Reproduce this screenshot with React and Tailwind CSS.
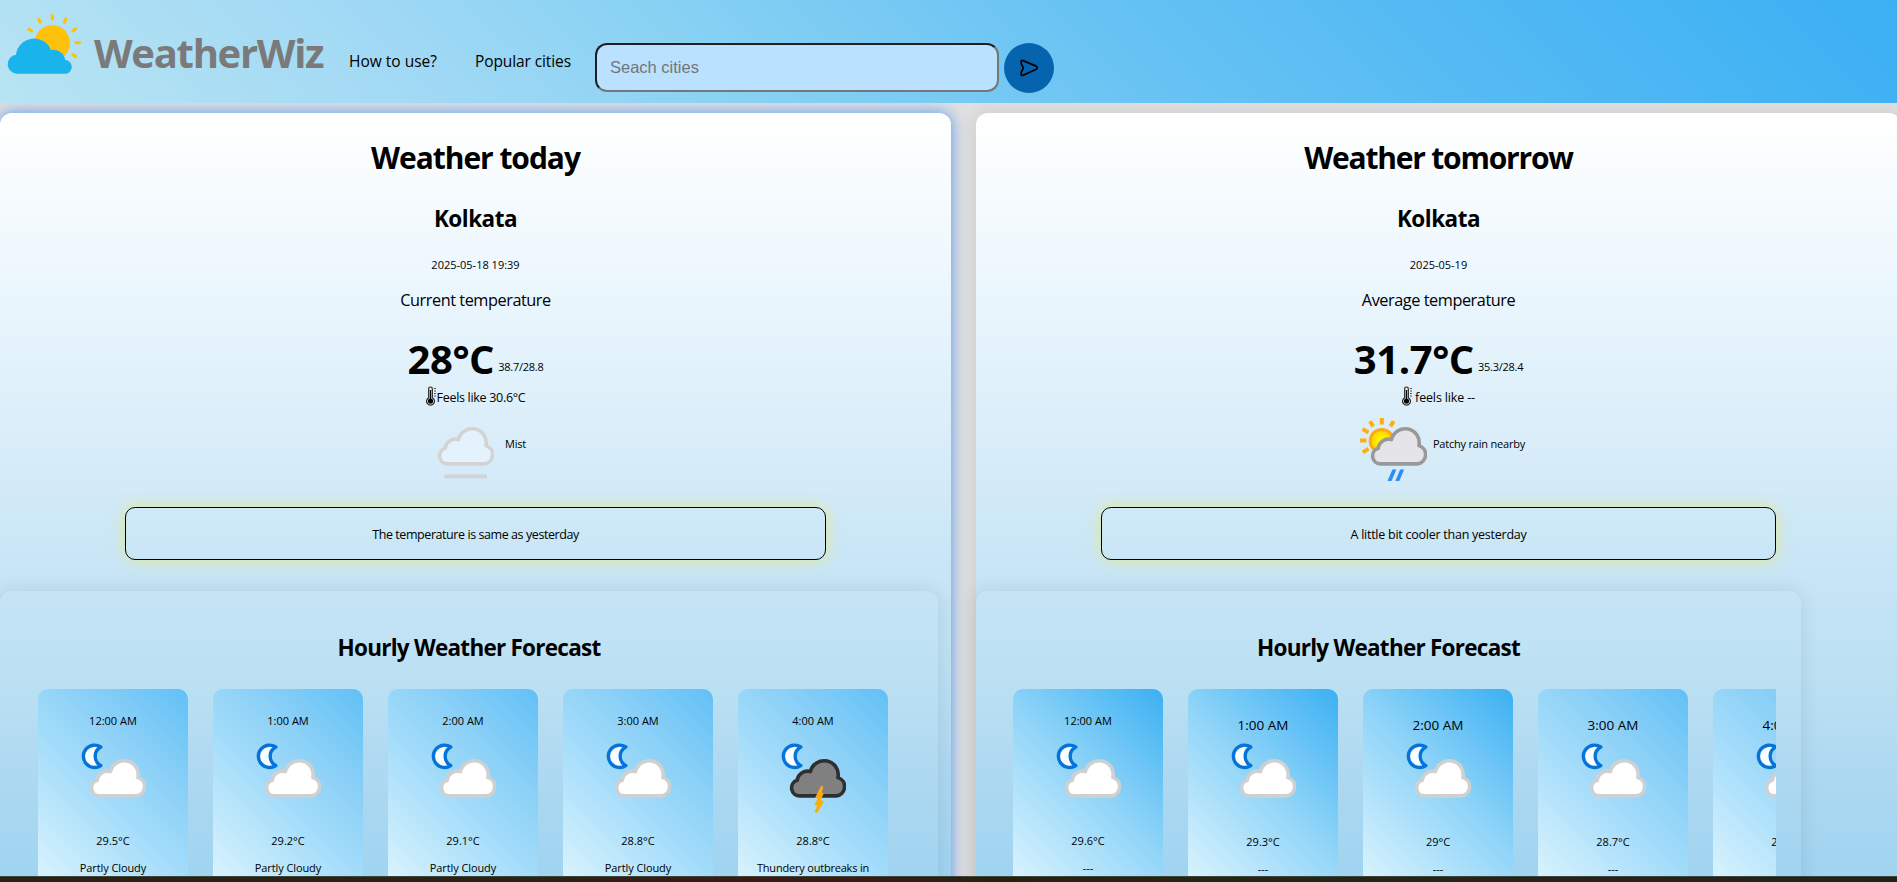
const CLOUD_PATH =
  "M10 35.9A8 8 0 0 1 7.4 20.3A10.2 10.2 0 0 1 20.4 11.6A13.85 13.85 0 0 1 47.5 17.6A9.4 9.4 0 0 1 45.8 35.9Z";

function Cloud({ x, y, fill, stroke }) {
  return (
    <path
      d={CLOUD_PATH}
      transform={`translate(${x - 0.3} ${y}) scale(1.015 1)`}
      fill={fill}
      stroke={stroke}
      strokeWidth="3.6"
      strokeLinejoin="round"
    />
  );
}

function MistIcon() {
  return (
    <svg width="68" height="66" viewBox="0 0 68 66" className="shrink-0">
      <Cloud x={12} y={11} fill="#e3f2fc" stroke="#d3d3d3" />
      <path d="M18.5 59.3H61" stroke="#d3d3d3" strokeWidth="3.8" />
    </svg>
  );
}

function RainIcon() {
  return (
    <svg width="68" height="66" viewBox="0 0 68 66" className="shrink-0">
      <defs>
        <radialGradient id="sun">
          <stop offset="0.3" stopColor="#fff200" />
          <stop offset="1" stopColor="#ffd000" />
        </radialGradient>
      </defs>
      <circle cx="22.8" cy="24" r="11.6" fill="url(#sun)" stroke="#ffa914" strokeWidth="3" />
      <path
        d="M22.8 1V7.5M11 4.2L14.2 9.4M34.6 4.2L31.4 9.4M3.6 11.8L9.4 15.6M1 23.5H7.5M3.8 35.4L9.6 31.8"
        stroke="#ffae12"
        strokeWidth="4"
      />
      <Cloud x={12} y={11} fill="#e5e4e9" stroke="#999999" />
      <path d="M28.5 64L33.4 52.4H37.4L32.5 64ZM36.3 64L41.2 52.4H45.2L40.3 64Z" fill="#2d8df0" />
    </svg>
  );
}

function NightIcon({ storm }) {
  return (
    <svg width="66" height="76" viewBox="0 0 66 76" className="shrink-0">
      <path
        d="M20.8 5A11.2 11.2 0 1 0 20.8 23.6A10.5 10.5 0 0 1 20.8 5Z"
        fill="#f6fcff"
        stroke="#0573d8"
        strokeWidth="3.4"
        strokeLinejoin="round"
      />
      {storm ? (
        <>
          <Cloud x={10} y={18} fill="#808080" stroke="#2f2f2f" />
          <path
            d="M41 44L43.4 44.6L41.7 50.8L43.8 51.2L40.8 58L44 59.2L37.6 70.6L34.4 70.6L37.2 63.4L34.4 62.4L38 56.6L35 56Z"
            fill="#ffab0a"
          />
        </>
      ) : (
        <Cloud x={10} y={18} fill="#ffffff" stroke="#d0d0d0" />
      )}
    </svg>
  );
}

function Logo() {
  return (
    <svg width="94" height="103" viewBox="0 0 94 103" className="shrink-0">
      <circle cx="52.3" cy="43" r="17.8" fill="#ffc10c" />
      <path
        d="M52.3 15.4V18.9M38.8 19.1L40.2 22.1M65.8 19.1L64.4 22.1M28.9 29.2L31.5 31M75.6 29L73 30.9M76 42.7H79.4M73 54.6L75.6 56.4"
        stroke="#ffc10c"
        strokeWidth="3.2"
        strokeLinecap="round"
      />
      <path
        d="M16.6 73.7A9.55 9.55 0 0 1 16 54.7A18.2 18.2 0 0 1 51 50A12 12 0 0 1 65.2 60A6.9 6.9 0 0 1 66 73.7Z"
        fill="#1bb3ec"
      />
    </svg>
  );
}

function Thermometer() {
  return (
    <svg width="11" height="20" viewBox="0 0 11 20" className="mt-px shrink-0">
      <path
        d="M2.7 11.8V2.8A1.8 1.8 0 0 1 6.3 2.8V11.8A3.9 3.9 0 1 1 2.7 11.8Z"
        fill="#f2f8fc"
        stroke="#222"
        strokeWidth="1.2"
      />
      <circle cx="4.5" cy="15.1" r="2.6" fill="#000" />
      <path d="M4.5 4V14" stroke="#000" strokeWidth="1.3" />
      <path d="M8 2.5H10M8 5H10M8 7.5H10M8 10H10" stroke="#555" strokeWidth="1" />
    </svg>
  );
}

const TONES = {
  light: "bg-[linear-gradient(45deg,#e2f7fe_0%,#d5f1fd_10%,#a3dcfa_48%,#8bd0f7_70%,#61c0f6_100%)]",
  deep: "bg-[linear-gradient(45deg,#e2f7fe_0%,#c8ecfc_18%,#8fd4f8_55%,#3bb0f3_100%)]",
};

function HourCard({ time, temp, text, storm, tone, large }) {
  return (
    <div className={`flex h-[215px] w-[150px] shrink-0 flex-col items-center rounded-[10px] ${TONES[tone]}`}>
      {large ? (
        <p className="mt-[27px] mb-[7px] text-[13.5px] leading-[19px]">{time}</p>
      ) : (
        <p className="mt-6 mb-[14px] text-[11px] leading-[15px]">{time}</p>
      )}
      <NightIcon storm={storm} />
      <p className={`text-[11px] leading-[15px] ${large ? "mt-4" : "mt-[15px]"}`}>{temp}</p>
      <p className={`mt-3 text-[11px] leading-[15px] whitespace-nowrap ${storm ? "tracking-[-0.2px]" : "tracking-[-0.1px]"}`}>
        {text}
      </p>
    </div>
  );
}

function DayPanel({ day, panelClass, forecastClass, stripClass, hours }) {
  return (
    <section
      className={`h-[1000px] shrink-0 rounded-xl bg-[linear-gradient(180deg,#ffffff_0px,#eaf6fd_185px,#d4eaf8_370px,#cfe9f7_395px,#c5e4f6_480px,#bce1f3_560px,#b1daf2_640px,#a9d7f0_695px,#a1d4f1_760px)] ${panelClass}`}
    >
      <h1 className={`pt-[25px] text-center text-[30px] leading-10 font-bold ${day.titleClass}`}>{day.title}</h1>
      <h2 className="mt-[26px] text-center text-[22.5px] leading-[30px] font-bold tracking-[-0.5px]">{day.city}</h2>
      <p className="mt-[23px] text-center text-[11px] leading-[15px]">{day.date}</p>
      <p className="mt-[17px] text-center text-[16.3px] leading-[22px] tracking-[-0.45px]">{day.label}</p>
      <div className="mt-[21px] flex h-[53px] justify-center gap-[4px]">
        <span className="text-[40px] leading-[54px] font-bold tracking-[-0.4px]">{day.temp}</span>
        <span className="mt-[27px] text-[11px] leading-[15px] tracking-[-0.25px]">{day.range}</span>
      </div>
      <div className="flex h-[21px] justify-center">
        <Thermometer />
        <span className={`mt-1 text-[12.5px] leading-[17px] ${day.feelsClass}`}>{day.feels}</span>
      </div>
      <div className={`mt-[11px] flex h-[66px] justify-center ${day.conditionClass}`}>
        {day.icon}
        <span className="mt-[19px] text-[11px] leading-[15px] tracking-[-0.2px]">{day.condition}</span>
      </div>
      <div className="mx-[125px] mt-6 flex h-[53px] justify-center rounded-[10px] border border-black shadow-[0_0_15px_rgba(240,235,100,0.7)]">
        <p className={`mt-[18px] text-[12.5px] leading-[17px] ${day.compareClass}`}>{day.compare}</p>
      </div>
      <div className={`mt-[31px] h-[600px] rounded-xl pt-[42px] shadow-[0_0_20px_rgba(0,0,0,0.1)] ${forecastClass}`}>
        <h2 className="text-center text-[22.5px] leading-[30px] font-bold tracking-[-0.75px]">
          Hourly Weather Forecast
        </h2>
        <div className={`mt-[26px] flex gap-[25px] overflow-hidden ${stripClass}`}>
          {hours.map((h) => (
            <HourCard key={h.time} {...h} />
          ))}
        </div>
      </div>
    </section>
  );
}

const TODAY = {
  title: "Weather today",
  titleClass: "tracking-[-1.05px]",
  city: "Kolkata",
  date: "2025-05-18 19:39",
  label: "Current temperature",
  temp: "28°C",
  range: "38.7/28.8",
  feels: "Feels like 30.6°C",
  feelsClass: "tracking-[-0.3px]",
  condition: "Mist",
  conditionClass: "gap-[11px] pl-px",
  icon: <MistIcon />,
  compare: "The temperature is same as yesterday",
  compareClass: "tracking-[-0.43px]",
};

const TOMORROW = {
  title: "Weather tomorrow",
  titleClass: "tracking-[-1.2px]",
  city: "Kolkata",
  date: "2025-05-19",
  label: "Average temperature",
  temp: "31.7°C",
  range: "35.3/28.4",
  feels: "feels like --",
  feelsClass: "pl-[2px] tracking-[-0.15px]",
  condition: "Patchy rain nearby",
  conditionClass: "gap-[6px] pl-[7px]",
  icon: <RainIcon />,
  compare: "A little bit cooler than yesterday",
  compareClass: "tracking-[-0.25px]",
};

const TODAY_HOURS = [
  { time: "12:00 AM", temp: "29.5°C", text: "Partly Cloudy", tone: "light" },
  { time: "1:00 AM", temp: "29.2°C", text: "Partly Cloudy", tone: "light" },
  { time: "2:00 AM", temp: "29.1°C", text: "Partly Cloudy", tone: "light" },
  { time: "3:00 AM", temp: "28.8°C", text: "Partly Cloudy", tone: "light" },
  { time: "4:00 AM", temp: "28.8°C", text: "Thundery outbreaks in", tone: "light", storm: true },
];

const TOMORROW_HOURS = [
  { time: "12:00 AM", temp: "29.6°C", text: "---", tone: "deep" },
  { time: "1:00 AM", temp: "29.3°C", text: "---", tone: "deep", large: true },
  { time: "2:00 AM", temp: "29°C", text: "---", tone: "deep", large: true },
  { time: "3:00 AM", temp: "28.7°C", text: "---", tone: "light", large: true },
  { time: "4:00 AM", temp: "28.4°C", text: "---", tone: "light", large: true },
];

export default function App() {
  return (
    <div className="flex h-[882px] w-full flex-col overflow-hidden bg-[#e0e0e0] font-['Open_Sans','Noto_Sans',sans-serif] text-black">
      <header className="z-10 flex h-[103px] shrink-0 items-start bg-[linear-gradient(45deg,#b8e4f2_0%,#a1d9f5_22%,#8cd3f3_35%,#78caf3_48%,#66c2f3_60%,#4fb8f3_80%,#3bb0f3_100%)]">
        <Logo />
        <span className="mt-[26px] w-[255px] text-[40px] leading-[54px] font-bold tracking-[-1.3px] text-[#7a7a7a]">
          WeatherWiz
        </span>
        <a className="mt-[51px] w-[126px] text-[15.5px] leading-5 whitespace-nowrap">How to use?</a>
        <a className="mt-[51px] w-[120px] text-[15.5px] leading-5 tracking-[-0.1px] whitespace-nowrap">Popular cities</a>
        <div className="mt-[43px] flex gap-[5px]">
          <input
            placeholder="Seach cities"
            className="h-[49px] w-[404px] rounded-xl border-2 border-t-[#1f1f1f] border-r-[#767676] border-b-[#767676] border-l-[#1f1f1f] bg-[#bae1ff] px-[13px] font-['Liberation_Sans',Arial,sans-serif] text-[16.5px] placeholder:text-[#757575]"
          />
          <button className="flex size-[50px] items-center justify-center rounded-full bg-[#0663ad]">
            <svg width="20" height="18" viewBox="0 0 20 18" fill="none" stroke="#000" strokeWidth="1.8" strokeLinejoin="round">
              <path d="M4 1.6L17.2 7.1Q19 8.6 17.2 10.3L4 16.3Q1.8 16.8 2.1 14.4C2.4 11.4 4.2 10.6 4.2 9C4.2 7.4 2.4 6.6 2.1 3.4Q1.8 1 4 1.6Z" />
            </svg>
          </button>
        </div>
      </header>
      <main className="flex h-[773px] shrink-0 gap-[25px] overflow-hidden pt-[10px]">
        <DayPanel
          day={TODAY}
          panelClass="w-[951px] shadow-[0_0_15px_rgba(50,130,245,0.8)]"
          forecastClass="w-[938px]"
          stripClass="mx-[38px]"
          hours={TODAY_HOURS}
        />
        <DayPanel
          day={TOMORROW}
          panelClass="w-[925px] shadow-[0_0_20px_rgba(0,0,0,0.1)]"
          forecastClass="w-[825px]"
          stripClass="mr-[25px] ml-[37px]"
          hours={TOMORROW_HOURS}
        />
      </main>
      <footer className="h-[6px] shrink-0 border-t border-[#45443a] bg-[linear-gradient(90deg,#262314_0%,#262415_28%,#381c14_38%,#371c14_45%,#22230f_52%,#1f2814_66%,#22231f_84%,#1c2419_100%)]" />
    </div>
  );
}
